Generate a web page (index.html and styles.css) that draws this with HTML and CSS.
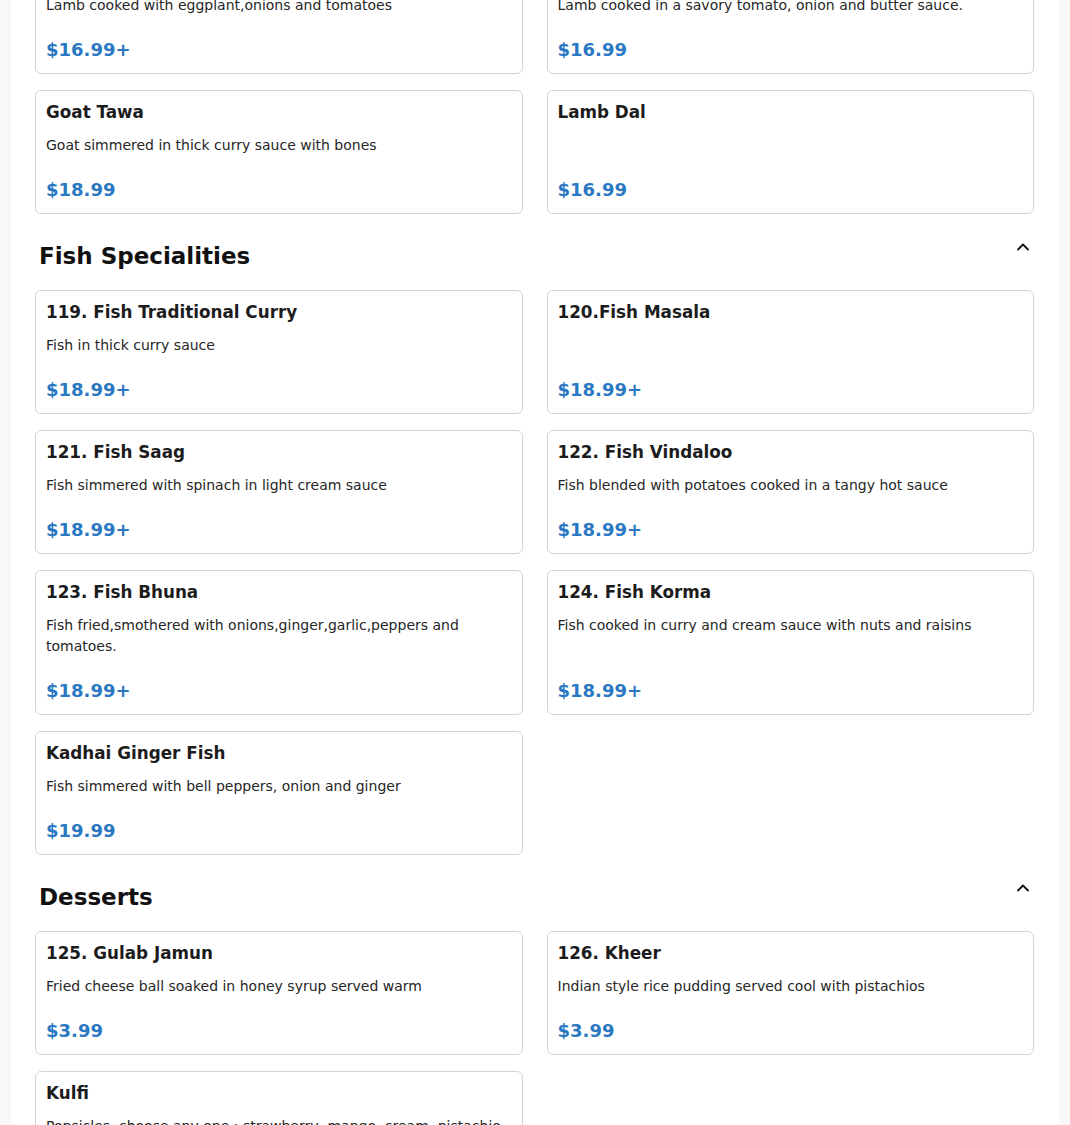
FILE: index.html
```html
<!DOCTYPE html>
<html lang="en">
<head>
<meta charset="utf-8">
<title>Menu</title>
<link rel="stylesheet" href="styles.css">
</head>
<body>
<main class="page">
  <section class="section section-first">
    <div class="grid">
      <article class="card">
        <h3 class="title">Lamb Bhurtha</h3>
        <p class="desc">Lamb cooked with eggplant,onions and tomatoes</p>
        <div class="price">$16.99+</div>
      </article>
      <article class="card">
        <h3 class="title">Lamb Makhani</h3>
        <p class="desc">Lamb cooked in a savory tomato, onion and butter sauce.</p>
        <div class="price">$16.99</div>
      </article>
      <article class="card">
        <h3 class="title">Goat Tawa</h3>
        <p class="desc">Goat simmered in thick curry sauce with bones</p>
        <div class="price">$18.99</div>
      </article>
      <article class="card">
        <h3 class="title">Lamb Dal</h3>
        <p class="desc"></p>
        <div class="price">$16.99</div>
      </article>
    </div>
  </section>

  <section class="section">
    <div class="section-head">
      <h2>Fish Specialities</h2>
      <button class="toggle" aria-label="Collapse"><svg viewBox="0 0 16 16" width="16" height="16"><path d="M3 10.5 L8 5.5 L13 10.5" fill="none" stroke="#111" stroke-width="1.8" stroke-linecap="round" stroke-linejoin="round"/></svg></button>
    </div>
    <div class="grid">
      <article class="card">
        <h3 class="title">119. Fish Traditional Curry</h3>
        <p class="desc">Fish in thick curry sauce</p>
        <div class="price">$18.99+</div>
      </article>
      <article class="card">
        <h3 class="title">120.Fish Masala</h3>
        <p class="desc"></p>
        <div class="price">$18.99+</div>
      </article>
      <article class="card">
        <h3 class="title">121. Fish Saag</h3>
        <p class="desc">Fish simmered with spinach in light cream sauce</p>
        <div class="price">$18.99+</div>
      </article>
      <article class="card">
        <h3 class="title">122. Fish Vindaloo</h3>
        <p class="desc">Fish blended with potatoes cooked in a tangy hot sauce</p>
        <div class="price">$18.99+</div>
      </article>
      <article class="card">
        <h3 class="title">123. Fish Bhuna</h3>
        <p class="desc">Fish fried,smothered with onions,ginger,garlic,peppers and tomatoes.</p>
        <div class="price">$18.99+</div>
      </article>
      <article class="card">
        <h3 class="title">124. Fish Korma</h3>
        <p class="desc">Fish cooked in curry and cream sauce with nuts and raisins</p>
        <div class="price">$18.99+</div>
      </article>
      <article class="card">
        <h3 class="title">Kadhai Ginger Fish</h3>
        <p class="desc">Fish simmered with bell peppers, onion and ginger</p>
        <div class="price">$19.99</div>
      </article>
    </div>
  </section>

  <section class="section">
    <div class="section-head">
      <h2>Desserts</h2>
      <button class="toggle" aria-label="Collapse"><svg viewBox="0 0 16 16" width="16" height="16"><path d="M3 10.5 L8 5.5 L13 10.5" fill="none" stroke="#111" stroke-width="1.8" stroke-linecap="round" stroke-linejoin="round"/></svg></button>
    </div>
    <div class="grid">
      <article class="card">
        <h3 class="title">125. Gulab Jamun</h3>
        <p class="desc">Fried cheese ball soaked in honey syrup served warm</p>
        <div class="price">$3.99</div>
      </article>
      <article class="card">
        <h3 class="title">126. Kheer</h3>
        <p class="desc">Indian style rice pudding served cool with pistachios</p>
        <div class="price">$3.99</div>
      </article>
      <article class="card">
        <h3 class="title">Kulfi</h3>
        <p class="desc">Popsicles, choose any one : strawberry, mango, cream, pistachio</p>
        <div class="price">$3.99</div>
      </article>
    </div>
  </section>
</main>
</body>
</html>
```

FILE: styles.css
```css
* { box-sizing: border-box; }

html, body {
  margin: 0;
  padding: 0;
  background: #f8f8f8;
  font-family: "DejaVu Sans", Verdana, sans-serif;
  color: #222;
}

.page {
  max-width: 1048px;
  margin: 0 auto;
  background: #ffffff;
  padding: 0 25px 40px 24px;
  min-height: 1200px;
}

.section-first {
  margin-top: -50px;
}

.section-head {
  display: flex;
  justify-content: space-between;
  align-items: flex-start;
  padding: 0 0 0 4px;
  margin-top: 28px;
  margin-bottom: 20px;
}

.section-head h2 {
  margin: 0;
  font-size: 23px;
  line-height: 28px;
  font-weight: bold;
  color: #111;
}

.toggle {
  border: 0;
  background: transparent;
  padding: 0;
  margin: -7px -1px 0 0;
  width: 24px;
  height: 24px;
  display: flex;
  align-items: center;
  justify-content: center;
  cursor: pointer;
}

.grid {
  display: grid;
  grid-template-columns: 1fr 1fr;
  column-gap: 24px;
  row-gap: 16px;
}

.card {
  display: flex;
  flex-direction: column;
  border: 1px solid #d4d4d4;
  border-radius: 6px;
  padding: 10px 10px 12px 10px;
  background: #fff;
}

.title {
  margin: 0;
  font-size: 16.8px;
  line-height: 22px;
  font-weight: bold;
  color: #1c1c1c;
}

.desc {
  flex: 1 0 auto;
  margin: 12px 0 23px 0;
  font-size: 14px;
  line-height: 21px;
  min-height: 21px;
  color: #262626;
}

.price {
  font-size: 18px;
  line-height: 22px;
  font-weight: bold;
  color: #2a78c2;
}
```
